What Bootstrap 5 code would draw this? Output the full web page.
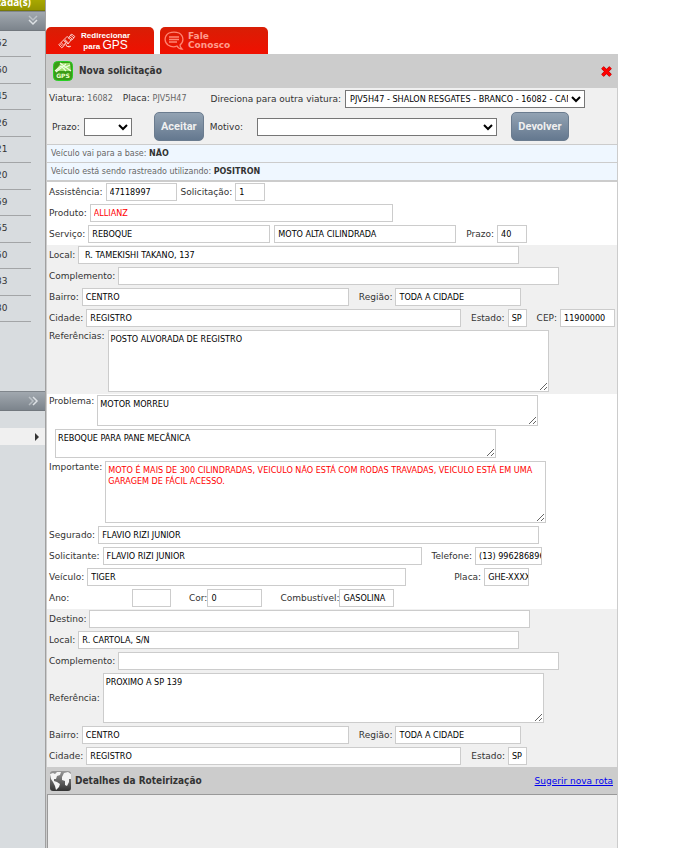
<!DOCTYPE html>
<html lang="pt-BR">
<head>
<meta charset="utf-8">
<meta name="viewport" content="width=device-width, initial-scale=1">
<title>Nova solicitação</title>
<link href="https://cdn.jsdelivr.net/npm/bootstrap@5.3.0/dist/css/bootstrap.min.css" rel="stylesheet">
<style>
  body { font-family: "DejaVu Sans", Verdana, sans-serif; font-size: 9px; line-height: 12px; color: #333; background: #fff; }
  .side { flex: 0 0 46px; min-width: 0; overflow: hidden; background: #d8dcdf; border-right: 1px solid #a0a0a0; }
  .side-title { height: 11px; background: linear-gradient(#a8a800, #949400); border-bottom: 1px solid #77770a; padding-right: 14px; }
  .side-title span { font: bold 10px/12px "Open Sans", sans-serif; color: #fff; margin-top: -4px; }
  .side-bar { height: 20px; background: linear-gradient(#a1a8af, #7c848c); border: 0; border-top: 1px solid #80868c; border-bottom: 1px solid #72787e; padding: 0 5px 0 0; }
  .side-list { height: 291px; list-style: none; }
  .side-list li { border-bottom: 1px solid #a3a5a7; width: 31px; padding-bottom: 1px; }
  .side-list .num { margin-left: -4px; }
  .side-space { height: 69px; }
  .side-sub { height: 17px; margin-top: 17px; background: #f0f0f0; border: 0; padding: 0 6px 0 0; }
  .main-col { min-width: 0; padding: 27px 72px 0 0; }
  .tabs-row { gap: 6px; }
  .tab-btn { width: 108px; height: 27px; border: 0; border-radius: 5px 5px 0 0; background: linear-gradient(#d81e05, #f01000); color: #fff; padding: 0; }
  .tab-gps { font: bold 8px/9px "Liberation Sans", sans-serif; }
  .tab-gps b { font: 12px/10px "Liberation Sans", sans-serif; }
  .tab-fale { color: #ff9c8c; font: bold 9px/9px "DejaVu Sans", sans-serif; }
  .panel { border: 1px solid #ccc; border-top: 0; border-bottom: 0; }
  .bar { background: #ccc; }
  .bar h2 { font: bold 10px/14px "DejaVu Sans Condensed", Tahoma, sans-serif; color: #333; }
  .bar-top { height: 34px; padding: 0 5px 0 6px; gap: 6px; }
  .bar-route { height: 28px; padding: 0 4px 0 3px; border-bottom: 1px solid #999; }
  .bar-route a { color: #00e; }
  .tone { background: #f0f0f0; }
  .actions { height: 56px; }
  .line-a { height: 21px; padding-left: 2px; }
  .line-b { height: 35px; padding-left: 5px; }
  .soft { color: #666; font-size: 8px; }
  .note { height: 18px; border-top: 1px solid #ccc; background: #eff7ff; padding-left: 4px; font-size: 8px; color: #666; }
  .note b { color: #333; }
  .note-last { height: 20px; border-bottom: 2px solid #ccc; }
  .fields { padding: 1px 2px 2px; gap: 3px; }
  .fields label { flex: none; padding-right: 3px; }
  .fld { height: 18px; min-width: 0; border: 1px solid #ccc; border-radius: 0; background: #fff; color: #000; padding: 0 0 0 3px; font: 9px/12px "DejaVu Sans Condensed", Tahoma, sans-serif; }
  textarea.fld { padding: 3px 2px; line-height: 11px; resize: both; }
  select.fld { border-color: #767676; padding: 0; }
  .fld:focus { outline: 1px solid #678; }
  .red { color: #f00; }
  .h29 { height: 29px; } .h31 { height: 31px; } .h50 { height: 50px; } .h62 { height: 62px; }
  .s19 { flex: 0 1 19px; } .s30 { flex: 0 1 30px; } .s40 { flex: 0 1 39px; } .s45 { flex: 0 1 45px; } .s48 { flex: 0 1 48px; }
  .s55 { flex: 0 1 55px; } .s67 { flex: 0 1 67px; } .s71 { flex: 0 1 71px; } .s126 { flex: 0 1 126px; }
  .s182 { flex: 0 1 182px; } .s240 { flex: 0 1 240px; } .s267 { flex: 0 1 267px; } .s303 { flex: 0 1 303px; }
  .s319 { flex: 0 1 319px; } .s375 { flex: 0 1 375px; } .s441 { flex: 0 1 441px; }
  .act { height: 29px; border: 1px solid #6b7c8f; border-radius: 5px; background: linear-gradient(#93a3b3, #64788f); color: #f0f0f0; font: bold 11px/12px Roboto, sans-serif; padding: 0; }
  .act-a { width: 50px; } .act-b { width: 58px; }
  .l70 { width: 83px; } .gap6 { margin-left: 6px; } .gap10 { margin-left: 10px; } .gap14 { margin-left: 14px; } .gap18 { margin-left: 18px; } .gap22 { margin-left: 22px; }
  .map { height: 54px; background: #eee; border-left: 1px solid #999; }
</style>
</head>
<body>
<div class="d-flex min-vh-100 overflow-hidden">
  <aside class="side d-flex flex-column">
    <div class="side-title d-flex justify-content-end overflow-hidden flex-shrink-0"><span>Realizada(s)</span></div>
    <button class="side-bar d-flex align-items-center justify-content-end" aria-label="Recolher">
      <svg width="14" height="12" viewBox="0 0 14 12" fill="none" stroke="#dde1e5" stroke-width="1.5"><path d="M3 1l4 4 4-4" opacity=".55"/><path d="M3 5l4 4 4-4"/></svg>
    </button>
    <ul class="side-list d-flex flex-column p-0 m-0">
      <li class="d-flex flex-fill align-items-center"><span class="num">52</span></li>
      <li class="d-flex flex-fill align-items-center"><span class="num">60</span></li>
      <li class="d-flex flex-fill align-items-center"><span class="num">45</span></li>
      <li class="d-flex flex-fill align-items-center"><span class="num">26</span></li>
      <li class="d-flex flex-fill align-items-center"><span class="num">21</span></li>
      <li class="d-flex flex-fill align-items-center"><span class="num">20</span></li>
      <li class="d-flex flex-fill align-items-center"><span class="num">59</span></li>
      <li class="d-flex flex-fill align-items-center"><span class="num">55</span></li>
      <li class="d-flex flex-fill align-items-center"><span class="num">50</span></li>
      <li class="d-flex flex-fill align-items-center"><span class="num">33</span></li>
      <li class="d-flex flex-fill align-items-center"><span class="num">30</span></li>
    </ul>
    <div class="side-space"></div>
    <button class="side-bar d-flex align-items-center justify-content-end" aria-label="Expandir">
      <svg width="12" height="12" viewBox="0 0 12 12" fill="none" stroke="#dde1e5" stroke-width="1.5"><path d="M1 2l4 4-4 4" opacity=".55"/><path d="M5 2l4 4-4 4"/></svg>
    </button>
    <button class="side-sub d-flex align-items-center justify-content-end" aria-label="Abrir submenu">
      <svg width="4" height="8" viewBox="0 0 4 8"><path d="M0 0l4 4-4 4z" fill="#333"/></svg>
    </button>
  </aside>

  <main class="main-col flex-fill">
    <div class="tabs-row d-flex">
      <button class="tab-btn tab-gps d-flex align-items-center">
        <svg class="ms-2 me-1 ps-1" width="25" height="22" viewBox="0 0 25 22" fill="none" stroke="#fff" stroke-width="1"><path d="M8 9l4-4 5 5-4 5zM1 16l3-3 4 4-3 3zM4 13l3-3 3 3-2 4M15 5l3-3 4 3-3 4zM15 5l-1 3M19 9l-3 1M16 3l5 4M3 15l3 3M10 14a5 5 0 0 0 5 5M13 18l4 0M9 9l5 5"/></svg>
        <span class="flex-fill text-center pe-4"><span class="d-block">Redirecionar</span><span class="d-block">para <b>GPS</b></span></span>
      </button>
      <button class="tab-btn tab-fale d-flex align-items-center text-start">
        <svg class="ms-1 me-1" width="20" height="19" viewBox="0 0 20 19" fill="none" stroke="#ff8573" stroke-width="1.3"><path d="M16 14c4-3 4-9-1-12C12 1 8 1 5 2 0 5 0 11 4 14c3 2 7 2 9 1 1 2 3 3 5 3-1-1-2-2-2-4zM5 6h10M5 8.500h10M5 11h8"/></svg>
        <span>Fale<br>Conosco</span>
      </button>
    </div>

    <section class="panel">
      <header class="bar bar-top d-flex align-items-center">
        <svg width="20" height="20" viewBox="0 0 20 20" aria-hidden="true"><rect x=".5" y=".5" width="19" height="19" rx="4" fill="#3a9c16" stroke="#28d024"/><path d="M2 10L8 2l9 0 1 8z" fill="#9bdc6a"/><path d="M2 10l6-5 5 5M7 2l11 8M13 3L3 11M11 7l6-3" stroke="#efffe0" stroke-width="1.200" fill="none"/><text x="10" y="17" text-anchor="middle" font-family="DejaVu Sans" font-weight="bold" font-size="6" fill="#efffd0">GPS</text></svg>
        <h2 class="m-0">Nova solicitação</h2>
        <button class="ms-auto border-0 bg-transparent p-0 d-flex" aria-label="Fechar"><svg width="11" height="11" viewBox="0 0 11 11"><path d="M1.500 1.500l8 8M9.500 1.500l-8 8" stroke="#a00" stroke-width="3.600"/><path d="M1.500 1.500l8 8M9.500 1.500l-8 8" stroke="#f00" stroke-width="2.600"/></svg></button>
      </header>

      <div class="actions tone">
        <div class="line-a d-flex align-items-center text-nowrap">
          <span>Viatura: <span class="soft">16082</span></span>
          <span class="gap10">Placa: <span class="soft">PJV5H47</span></span>
          <label class="ms-4" for="outra">Direciona para outra viatura:</label>
          <select class="fld s240 ms-1" id="outra"><option>PJV5H47 - SHALON RESGATES - BRANCO - 16082 - CAMINHÃO</option></select>
        </div>
        <div class="line-b d-flex align-items-center">
          <label class="pe-1" for="prazo0">Prazo:</label>
          <select class="fld s48" id="prazo0"><option></option></select>
          <button class="act act-a gap22">Aceitar</button>
          <label class="gap6" for="motivo">Motivo:</label>
          <select class="fld s240 gap14" id="motivo"><option></option></select>
          <button class="act act-b gap14">Devolver</button>
        </div>
      </div>
      <div class="note d-flex align-items-center"><span>Veículo vai para a base: <b>NÃO</b></span></div>
      <div class="note note-last d-flex align-items-center"><span>Veículo está sendo rastreado utilizando: <b>POSITRON</b></span></div>

      <div class="fields d-flex flex-column">
        <div class="d-flex align-items-center">
          <label for="assist">Assistência:</label><input class="fld s71" id="assist" value="47118997">
          <label class="ms-1" for="solic">Solicitação:</label><input class="fld s30" id="solic" value="1">
        </div>
        <div class="d-flex align-items-center">
          <label for="produto">Produto:</label><input class="fld s303 red" id="produto" value="ALLIANZ">
        </div>
        <div class="d-flex align-items-center">
          <label for="servico">Serviço:</label><input class="fld s182" id="servico" value="REBOQUE">
          <input class="fld s182 ms-1" aria-label="Tipo de serviço" value="MOTO ALTA CILINDRADA">
          <label class="gap10" for="prazo">Prazo:</label><input class="fld s30" id="prazo" value="40">
        </div>
      </div>

      <div class="fields tone d-flex flex-column">
        <div class="d-flex align-items-center">
          <label for="local">Local:</label><input class="fld s441" id="local" value=" R. TAMEKISHI TAKANO, 137">
        </div>
        <div class="d-flex align-items-center">
          <label for="compl">Complemento:</label><input class="fld s441" id="compl">
        </div>
        <div class="d-flex align-items-center">
          <label for="bairro">Bairro:</label><input class="fld s267" id="bairro" value="CENTRO">
          <label class="gap10" for="regiao">Região:</label><input class="fld s126" id="regiao" value="TODA A CIDADE">
        </div>
        <div class="d-flex align-items-center">
          <label for="cidade">Cidade:</label><input class="fld s375" id="cidade" value="REGISTRO">
          <label class="gap10" for="estado">Estado:</label><input class="fld s19" id="estado" value="SP">
          <label class="gap10" for="cep">CEP:</label><input class="fld s55" id="cep" value="11900000">
        </div>
        <div class="d-flex align-items-start">
          <label for="refs">Referências:</label><textarea class="fld s441 h62" id="refs">POSTO ALVORADA DE REGISTRO</textarea>
        </div>
      </div>

      <div class="fields d-flex flex-column">
        <div class="d-flex align-items-start">
          <label for="problema">Problema:</label><textarea class="fld s441 h31" id="problema">MOTOR MORREU</textarea>
        </div>
        <div class="d-flex align-items-start">
          <textarea class="fld s441 h29 gap6" aria-label="Descrição do problema">REBOQUE PARA PANE MECÂNICA</textarea>
        </div>
        <div class="d-flex align-items-start">
          <label for="importante">Importante:</label><textarea class="fld s441 h62 red" id="importante">MOTO É MAIS DE 300 CILINDRADAS, VEICULO NÃO ESTÁ COM RODAS TRAVADAS, VEICULO ESTÁ EM UMA GARAGEM DE FÁCIL ACESSO.</textarea>
        </div>
        <div class="d-flex align-items-center">
          <label for="segurado">Segurado:</label><input class="fld s441" id="segurado" value="FLAVIO RIZI JUNIOR">
        </div>
        <div class="d-flex align-items-center">
          <label for="solicitante">Solicitante:</label><input class="fld s319" id="solicitante" value="FLAVIO RIZI JUNIOR">
          <label class="gap10" for="tel">Telefone:</label><input class="fld s67" id="tel" value="(13) 996286896">
        </div>
        <div class="d-flex align-items-center">
          <label for="veiculo">Veículo:</label><input class="fld s319" id="veiculo" value="TIGER">
          <label class="ms-5" for="placa">Placa:</label><input class="fld s45" id="placa" value="GHE-XXXX">
        </div>
        <div class="d-flex align-items-center">
          <label class="l70" for="ano">Ano:</label><input class="fld s40" id="ano">
          <label class="gap18 pe-0" for="cor">Cor:</label><input class="fld s55" id="cor" value="0">
          <label class="gap18 pe-0" for="comb">Combustível:</label><input class="fld s55" id="comb" value="GASOLINA">
        </div>
      </div>

      <div class="fields tone d-flex flex-column">
        <div class="d-flex align-items-center">
          <label for="destino">Destino:</label><input class="fld s441" id="destino">
        </div>
        <div class="d-flex align-items-center">
          <label for="local2">Local:</label><input class="fld s441" id="local2" value="R. CARTOLA, S/N">
        </div>
        <div class="d-flex align-items-center">
          <label for="compl2">Complemento:</label><input class="fld s441" id="compl2">
        </div>
        <div class="d-flex align-items-center">
          <label for="ref2">Referência:</label><textarea class="fld s441 h50" id="ref2">PROXIMO A SP 139</textarea>
        </div>
        <div class="d-flex align-items-center">
          <label for="bairro2">Bairro:</label><input class="fld s267" id="bairro2" value="CENTRO">
          <label class="gap10" for="regiao2">Região:</label><input class="fld s126" id="regiao2" value="TODA A CIDADE">
        </div>
        <div class="d-flex align-items-center">
          <label for="cidade2">Cidade:</label><input class="fld s375" id="cidade2" value="REGISTRO">
          <label class="gap10" for="estado2">Estado:</label><input class="fld s19" id="estado2" value="SP">
        </div>
      </div>

      <header class="bar bar-route d-flex align-items-center">
        <svg width="21" height="20" viewBox="0 0 21 20" aria-hidden="true"><defs><linearGradient id="g" x2="0" y2="1"><stop stop-color="#999"/><stop offset="1" stop-color="#333"/></linearGradient></defs><rect width="21" height="20" rx="3" fill="url(#g)"/><path d="M0 3l3-1 2 1 2-2 4 0-1 3-3 1-1 3-2 0 0 2 3 1 3 2-1 3-3 3-1-4-2-4-2-3zM12 6l2-4 4-1 3 2 0 5-2 0 0 3-2 4-2-1 0-4-3-1z" fill="#f4f4f4"/></svg>
        <h2 class="m-0 ps-1">Detalhes da Roteirização</h2>
        <a class="ms-auto" href="#">Sugerir nova rota</a>
      </header>
      <div class="map"></div>
    </section>
  </main>
</div>
<script src="https://cdn.jsdelivr.net/npm/bootstrap@5.3.0/dist/js/bootstrap.bundle.min.js"></script>
</body>
</html>
